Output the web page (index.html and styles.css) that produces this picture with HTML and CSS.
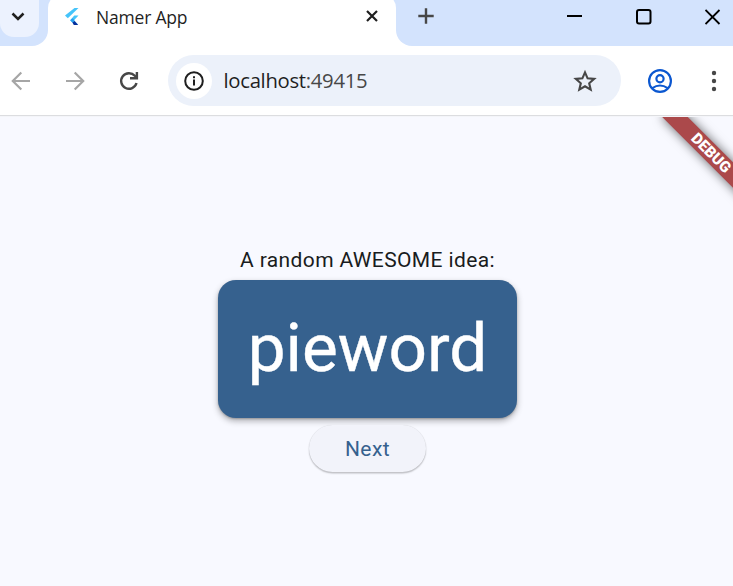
FILE: index.html
```html
<!DOCTYPE html>
<html lang="en">
<head>
<meta charset="utf-8">
<title>Namer App</title>
<link rel="stylesheet" href="styles.css">
</head>
<body>
<header class="tabstrip">
  <div class="search-area"><button class="tab-search" aria-label="Search tabs"><svg width="14" height="9" viewBox="0 0 14 9"><path d="M1.5 1.5 7 7l5.500-5.500" fill="none" stroke="#1f1f1f" stroke-width="2.500"/></svg></button></div>
  <div class="tab">
    <svg class="favicon" width="16" height="20" viewBox="0 0 16 20"><path d="M10.500 1H14.500L3.800 11.300 1 8.500z" fill="#45c4fa"/><path d="M10.300 8.500H14.500L10 13.300 14 17.500H10.300L6.200 13.300z" fill="#45c4fa"/><path d="M6.200 13.300 8.400 11.200 10.600 13.300 8.400 15.500z" fill="#299ff0"/><path d="M8.400 15.500 10.600 14 14.200 18H9.800z" fill="#062f9b"/></svg>
    <span class="tab-title">Namer App</span>
    <svg class="tab-close" width="12" height="12" viewBox="0 0 12 12"><path d="M1 1 11 11M11 1 1 11" stroke="#1f1f1f" stroke-width="2.200"/></svg>
  </div>
  <div class="strip-rest">
    <svg class="new-tab" width="16" height="16" viewBox="0 0 16 16"><path d="M8 .3V15.700M.3 8H15.700" stroke="#474747" stroke-width="2.400"/></svg>
    <div class="window-controls">
      <svg width="16" height="16" viewBox="0 0 16 16"><path d="M0 7H15" stroke="#000" stroke-width="2"/></svg>
      <svg width="16" height="16" viewBox="0 0 16 16"><rect x="1" y="1" width="13.500" height="13.500" rx="2" fill="none" stroke="#000" stroke-width="2"/></svg>
      <svg width="16" height="16" viewBox="0 0 16 16"><path d="M.5 1 14.500 15M14.500 1 .5 15" stroke="#000" stroke-width="1.800"/></svg>
    </div>
  </div>
</header>
<nav class="toolbar">
  <div class="nav-buttons">
    <svg width="20" height="20" viewBox="0 0 20 20"><path d="M19 10H2M10.300 1.500 1.800 10l8.500 8.500" fill="none" stroke="#a6a6a6" stroke-width="2.200"/></svg>
    <svg width="20" height="20" viewBox="0 0 20 20"><path d="M1 10H18M9.700 1.500 18.200 10l-8.500 8.500" fill="none" stroke="#a6a6a6" stroke-width="2.200"/></svg>
    <svg width="20" height="20" viewBox="0 0 20 20"><path d="M17.500 12A7.800 7.800 0 1 1 15.800 4.800L18 7M17.900 1V7.200H11" fill="none" stroke="#474747" stroke-width="2.400"/></svg>
  </div>
  <div class="omnibox">
    <span class="site-info"><svg width="20" height="20" viewBox="0 0 20 20"><circle cx="10" cy="10" r="8.800" fill="none" stroke="#1f1f1f" stroke-width="2"/><path d="M10 8.500V14.500M10 5.200V7.200" stroke="#1f1f1f" stroke-width="2"/></svg></span>
    <span class="url">localhost<span class="port">:49415</span></span>
    <svg class="star" width="24" height="24" viewBox="0 0 24 24"><path d="m12 3.400 2.600 5.900 6.600.6-5 4.400 1.500 6.400-5.700-3.400-5.700 3.400 1.500-6.400-5-4.400 6.600-.6z" fill="none" stroke="#474747" stroke-width="2.100"/></svg>
  </div>
  <svg class="profile" width="26" height="26" viewBox="0 0 26 26" fill="none" stroke="#0b57d0" stroke-width="2.200"><circle cx="13" cy="13" r="10.900"/><circle cx="13" cy="10.800" r="3.600"/><path d="M5.300 20.200Q13 14.800 20.700 20.200"/></svg>
  <svg class="more" width="6" height="22" viewBox="0 0 6 22" fill="#474747"><circle cx="3" cy="3" r="2.200"/><circle cx="3" cy="11" r="2.200"/><circle cx="3" cy="19" r="2.200"/></svg>
</nav>
<main class="app">
  <p class="caption">A random AWESOME idea:</p>
  <div class="card">pieword</div>
  <button class="next">Next</button>
  <div class="debug">DEBUG</div>
</main>
</body>
</html>
```
FILE: styles.css
```css
* { box-sizing: border-box; }
html, body { margin: 0; height: 100%; overflow: hidden; }
body { display: flex; flex-direction: column; background: #fff; }
svg { display: block; flex: none; }
button { border: 0; padding: 0; }
.tabstrip { display: flex; height: 46px; flex: none; background: #fff; }
.search-area { width: 48px; background: #d3e3fd; border-bottom-right-radius: 16px; }
.tab-search { display: flex; justify-content: center; width: 39px; height: 37px; padding: 12px 3px 0 0; background: #ecf2fe; border-radius: 0 0 14px 14px; }
.tab { display: flex; width: 348px; padding-left: 16px; background: linear-gradient(#d3e3fd 16px, #fff 16px); position: relative; isolation: isolate; }
.tab::before { content: ""; position: absolute; z-index: -1; inset: -6px 0 0; background: #fff; border-radius: 14px 14px 0 0; }
.favicon { margin-top: 6.500px; }
.tab-title { margin: 5px 0 0 16px; width: 260px; font: 17.500px/25px "Open Sans", sans-serif; color: #1f1f1f; letter-spacing: -.2px; }
.tab-close { margin: 10px 0 0 10px; }
.strip-rest { display: flex; flex: 1; justify-content: space-between; background: #d3e3fd; border-bottom-left-radius: 16px; }
.new-tab { margin: 8px 0 0 22px; }
.window-controls { display: flex; gap: 53px; margin: 9px 12px 0 0; }
.toolbar { display: flex; align-items: center; flex: none; height: 71px; padding-bottom: 1px; border-bottom: 1px solid #f4f5f9; box-shadow: inset 0 -1px #dcdde0; }
.nav-buttons { display: flex; gap: 34px; padding-left: 11px; width: 168px; }
.omnibox { display: flex; align-items: center; width: 453px; height: 51px; border-radius: 26px; background: #ecf1fa; padding: 0 24px 0 8px; }
.site-info { display: grid; place-items: center; width: 36px; height: 36px; border-radius: 50%; background: #fff; }
.url { flex: 1; margin-left: 11.500px; padding-bottom: 2px; font: 20.300px/28px "Open Sans", sans-serif; color: #1f1f1f; letter-spacing: -.3px; }
.port { color: #474747; }
.profile { margin-left: 26px; }
.more { margin-left: 38px; }
.app { position: relative; flex: 1; display: flex; flex-direction: column; align-items: center; overflow: hidden; padding: 128px 0 0 2px; background: #f8f9ff; font-family: Roboto, sans-serif; }
.caption { margin: 0; font-size: 21px; line-height: 30px; letter-spacing: .375px; color: #191c20; white-space: nowrap; }
.card { display: grid; place-items: center; width: 299px; height: 138px; margin-top: 5.400px; padding-bottom: 2px; border-radius: 18px; background: #36618e; color: #fff; -webkit-text-stroke: .4px #fff; font-size: 67.500px; line-height: 78px; box-shadow: 0 3px 6px rgba(0,0,0,.3), 0 1px 2px rgba(0,0,0,.2); }
.next { width: 117px; height: 47px; margin-top: 6.600px; padding-top: 1px; border-radius: 24px; background: #f2f3fa; color: #36618e; font: 400 21px/46px Roboto, sans-serif; letter-spacing: .4px; box-shadow: 0 1.500px 1.500px rgba(0,0,0,.22), 0 0 1px rgba(0,0,0,.15); }
.debug { position: absolute; left: 651px; top: 27px; width: 120px; height: 18px; transform: rotate(45deg); background: #ab494b; box-shadow: 0 0 11px rgba(0,0,0,.6); color: #fff; font: 900 15.300px/18px Roboto, sans-serif; text-align: center; }
```
